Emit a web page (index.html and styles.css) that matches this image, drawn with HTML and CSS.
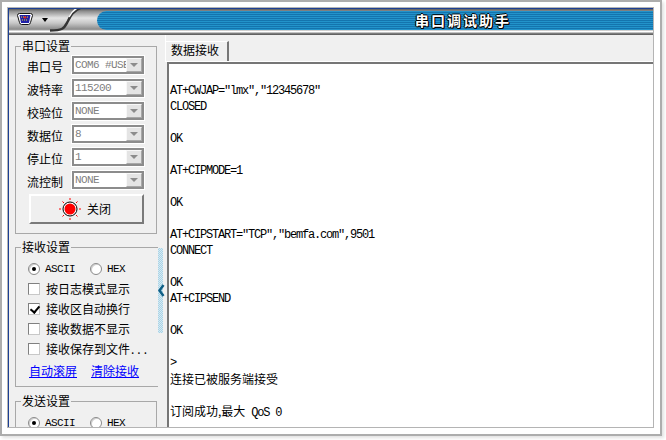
FILE: index.html
```html
<!DOCTYPE html>
<html lang="zh">
<head>
<meta charset="utf-8">
<title>串口调试助手</title>
<link rel="stylesheet" href="styles.css">
</head>
<body>
<div class="frame">
  <div class="window">
    <div class="app">
      <header class="titlebar">
        <div class="chrome">
          <svg class="port-icon" width="16" height="12" viewBox="0 0 16 12">
            <path d="M2.500 .500h11q2 0 2 2l-2 7q-.5 2-2 2h-7q-1.500 0-2-2l-2-7q0-2 2-2z" fill="#fff" stroke="#111" stroke-width="1"/>
            <path d="M2.500 2h11l-1.500 8h-8z" fill="#2020a8"/>
            <path d="M4 4h8M5 7h6" stroke="#f4e020" stroke-width="1" stroke-dasharray="1 1"/>
            <path d="M8 3v3M6.500 4.500h3" stroke="#e02020" stroke-width="1"/>
          </svg>
          <span class="caret"></span>
          <svg class="swoosh" width="38" height="25" viewBox="0 0 38 25">
            <path d="M0 21.500C14 21.500 14 19 18 12C21 6 23 2 30 -1" fill="none" stroke="#333" stroke-width="2.500"/>
            <path d="M19 8C21 4 23 1 29 -2" fill="none" stroke="#fafafa" stroke-width="1.500"/>
          </svg>
        </div>
        <div class="banner"><h1 class="title">串口调试助手</h1></div>
      </header>
      <div class="body">
        <aside class="side">
          <fieldset class="group">
            <legend>串口设置</legend>
            <div class="port-grid">
              <label>串口号</label><div class="combo"><span class="combo-text">COM6 #USB-SERIAL</span><span class="combo-btn"></span></div>
              <label>波特率</label><div class="combo"><span class="combo-text">115200</span><span class="combo-btn"></span></div>
              <label>校验位</label><div class="combo"><span class="combo-text">NONE</span><span class="combo-btn"></span></div>
              <label>数据位</label><div class="combo"><span class="combo-text">8</span><span class="combo-btn"></span></div>
              <label>停止位</label><div class="combo"><span class="combo-text">1</span><span class="combo-btn"></span></div>
              <label>流控制</label><div class="combo"><span class="combo-text">NONE</span><span class="combo-btn"></span></div>
            </div>
            <button class="open-btn" type="button">
              <svg width="24" height="24" viewBox="0 0 24 24">
                <circle cx="12" cy="12" r="7" fill="#fff" stroke="#000" stroke-width="1"/>
                <circle cx="12" cy="12" r="5.500" fill="#f00"/>
                <path d="M12 1v2M12 21v2M1 12h2M21 12h2M4.500 4.500l1.500 1.500M18 18l1.500 1.500M19.500 4.500l-1.500 1.500M6 18l-1.500 1.500" stroke="#f00" stroke-width="1"/>
              </svg>
              <span>关闭</span>
            </button>
          </fieldset>
          <fieldset class="group group-recv">
            <legend>接收设置</legend>
            <div class="radio-row">
              <span class="radio on"></span><span class="mono">ASCII</span>
              <span class="radio second"></span><span class="mono">HEX</span>
            </div>
            <div class="check-row"><span class="check"></span>按日志模式显示</div>
            <div class="check-row"><span class="check on"></span>接收区自动换行</div>
            <div class="check-row"><span class="check"></span>接收数据不显示</div>
            <div class="check-row"><span class="check"></span>接收保存到文件<span class="dots">...</span></div>
            <div class="links"><a href="#">自动滚屏</a><a href="#">清除接收</a></div>
          </fieldset>
          <fieldset class="group group-send">
            <legend>发送设置</legend>
            <div class="radio-row">
              <span class="radio on"></span><span class="mono">ASCII</span>
              <span class="radio second"></span><span class="mono">HEX</span>
            </div>
          </fieldset>
        </aside>
        <div class="splitter">
          <div class="grip"></div>
          <svg class="chevron" width="7" height="13" viewBox="0 0 7 13"><path d="M5.500 1L1.500 6.500L5.500 12" fill="none" stroke="#0f5f86" stroke-width="2.500"/></svg>
        </div>
        <main class="pane">
          <div class="tabs"><div class="tab">数据接收</div></div>
          <div class="log"><div class="line"></div><div class="line">AT+CWJAP="lmx","12345678"</div><div class="line">CLOSED</div><div class="line"></div><div class="line">OK</div><div class="line"></div><div class="line">AT+CIPMODE=1</div><div class="line"></div><div class="line">OK</div><div class="line"></div><div class="line">AT+CIPSTART="TCP","bemfa.com",9501</div><div class="line">CONNECT</div><div class="line"></div><div class="line">OK</div><div class="line">AT+CIPSEND</div><div class="line"></div><div class="line">OK</div><div class="line"></div><div class="line">&gt;</div><div class="line"><span class="cjk">连接已被服务端接受</span></div><div class="line"></div><div class="line"><span class="cjk">订阅成功,最大</span> QoS 0</div></div>
        </main>
      </div>
    </div>
  </div>
</div>
</body>
</html>
```
FILE: styles.css
```css
* { box-sizing: border-box; }
html, body { margin: 0; padding: 0; background: #fff; }
body { width: 666px; height: 440px; overflow: hidden; font: 12px/16px "Noto Sans CJK SC", sans-serif; color: #000; }

.frame {
  width: 662px; height: 436px;
  border: 2px solid #adadad;
  padding: 5px 6px 6px 5px;
  box-shadow: 2px 2px 3px #e2e2e2;
}
.window { height: 100%; border: 1px solid #b4b4b4; }
.app {
  height: 100%;
  display: flex; flex-direction: column;
  border-top: 1px solid #1c3f94; border-left: 1px solid #1c3f94;
  overflow: hidden;
  background: #f0f0f0;
}

.titlebar {
  flex: none; height: 26px;
  display: flex;
  background: linear-gradient(#5c5c5c 0, #8c8c8c 2px, #e4e4e4 9px, #c8c8c8 14px, #8e8e8e 20px, #a0a0a0 21px, #fff 22px, #fff 23px, #8a8a8a 24px, #555 26px);
}
.chrome { flex: none; width: 88px; display: flex; align-items: flex-start; }
.port-icon { margin: 4px 0 0 8px; }
.caret {
  margin: 9px 0 0 9px;
  border: 3px solid transparent; border-top: 4px solid #000; border-bottom: 0;
}
.swoosh { margin: 0 0 0 2px; flex: none; }
.banner {
  flex: 1; height: 19px; margin-top: 2px;
  display: flex; padding-left: 318px;
  border-radius: 10px 0 0 10px;
  background: repeating-linear-gradient(#2293cb 0, #2293cb 1px, #1474ae 1px, #1474ae 2px);
}
.title {
  margin: 0; font-size: 14px; line-height: 18px; font-weight: 700;
  letter-spacing: 2px; color: #fff;
  text-shadow: 1px 0 #000, -1px 0 #000, 0 1px #000, 0 -1px #000, 1px 1px #000;
}

.body { flex: 1; min-height: 0; display: flex; }
.side { flex: none; width: 149px; padding: 3px 0 0 6px; overflow: hidden; }

.group {
  margin: 0; width: 142px; padding: 2px 11px 9px 11px;
  border: 1px solid #a8a8a8;
}
.group legend { padding: 0 1px; font-size: 12px; line-height: 16px; margin-left: -6px; }
.group-recv { margin-top: 5px; padding: 4px 8px 5px 12px; }
.group-recv legend, .group-send legend { margin-left: -7px; }
.group-send { margin-top: 6px; padding: 4px 8px 0 12px; }

.port-grid { display: grid; grid-template-columns: 45px 72px; grid-auto-rows: 18px; row-gap: 5px; align-items: center; }
.port-grid label { font-size: 12px; padding-top: 4px; }
.combo {
  display: flex; height: 18px;
  border: 2px solid #8c8c8c;
  outline: 1px solid #fff;
  background: #fff; overflow: hidden;
}
.combo-text {
  flex: 1; min-width: 0; padding-left: 1px; overflow: hidden; white-space: nowrap;
  font: 11px/14px "Liberation Mono", monospace; letter-spacing: -0.6px; color: #808080;
}
.combo-btn {
  flex: none; width: 16px;
  background: #e4e4e4; border: 1px solid; border-color: #f8f8f8 #a8a8a8 #a8a8a8 #f8f8f8;
  display: flex; align-items: center; justify-content: center;
}
.combo-btn::after { content: ""; border: 4px solid transparent; border-top: 4px solid #8c8c8c; border-bottom: 0; }

.open-btn {
  display: flex; align-items: center; justify-content: center; gap: 5px;
  width: 115px; height: 30px; margin: 5px 0 0 2px; padding: 0 4px 0 0;
  background: #efefef; color: #000;
  border: 2px solid; border-color: #fff #7a7a7a #7a7a7a #fff;
  font: 12px/16px "Noto Sans CJK SC", sans-serif;
}

.mono { font: 11px/16px "Liberation Mono", monospace; letter-spacing: -0.6px; }
.radio-row { display: flex; align-items: center; height: 20px; }
.radio {
  flex: none; width: 12px; height: 12px; margin-right: 5px;
  display: flex; align-items: center; justify-content: center;
  border-radius: 50%; border: 1px solid #8a8a8a; background: #fff;
  box-shadow: inset 1px 1px #d0d0d0;
}
.radio.on::after { content: ""; width: 4px; height: 4px; border-radius: 50%; background: #000; }
.radio.second { margin-left: 15px; }
.check-row { display: flex; align-items: center; height: 20px; white-space: nowrap; font-size: 12px; }
.dots { letter-spacing: 3px; margin-left: 1px; }
.check {
  flex: none; width: 12px; height: 12px; margin-right: 6px;
  border: 1px solid #808080; border-right-color: #c8c8c8; border-bottom-color: #c8c8c8;
  background: #fff; position: relative;
}
.check.on::after {
  content: ""; position: absolute; left: 3px; top: 0;
  width: 4px; height: 7px;
  border: solid #000; border-width: 0 2px 2px 0; transform: rotate(40deg);
}
.links { display: flex; gap: 14px; height: 20px; margin: 2px 0 0 1px; align-items: center; }
.links a { color: #00f; text-decoration: underline; }

.splitter { flex: none; width: 7px; position: relative; padding: 210px 0 0 0; }
.grip {
  width: 5px; height: 85px; margin-top: 3px;
  background: repeating-conic-gradient(#a9d3e6 0 25%, #d6eaf3 0 50%) 0 0 / 2px 2px;
}
.chevron { position: absolute; left: 0; top: 249px; }

.pane { flex: 1; min-width: 0; display: flex; flex-direction: column; }
.tabs { flex: none; height: 27px; padding: 6px 0 0 0; border-bottom: 1px solid #fff; border-left: 1px solid #fff; }
.tab {
  width: 63px; height: 20px; padding-left: 5px;
  font-size: 12px; line-height: 15px;
  border-top: 1px solid #fff; border-right: 2px solid #777;
}
.log {
  flex: 1; min-height: 0; margin-left: 2px; padding: 3px 0 0 1px; overflow: hidden;
  background: #fff; border-top: 2px solid #767676; border-left: 2px solid #767676;
  font: 12px/16px "Liberation Mono", monospace; letter-spacing: -1.2px; white-space: pre;
}
.line { height: 16px; }
.cjk { font-family: "Noto Sans CJK SC", sans-serif; letter-spacing: 0; }
```
